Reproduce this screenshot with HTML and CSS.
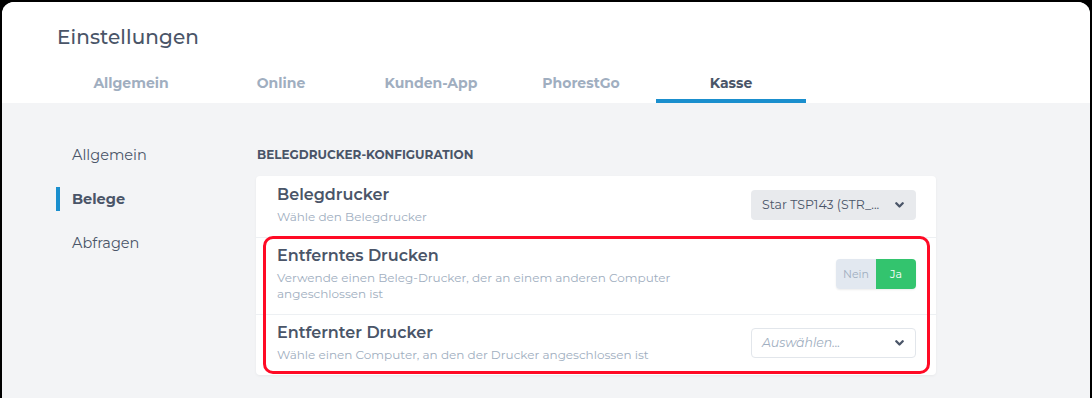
FILE: index.html
```html
<!DOCTYPE html>
<html lang="de">
<head>
<meta charset="utf-8">
<title>Einstellungen</title>
<link rel="stylesheet" href="styles.css">
</head>
<body>
<div class="window">
  <header class="header">
    <h1 class="title">Einstellungen</h1>
    <nav class="tabs">
      <div class="tab">Allgemein</div>
      <div class="tab">Online</div>
      <div class="tab">Kunden-App</div>
      <div class="tab">PhorestGo</div>
      <div class="tab tab-active">Kasse</div>
    </nav>
  </header>
  <main class="main">
    <aside class="sidebar">
      <div class="side-item">Allgemein</div>
      <div class="side-item side-active">Belege</div>
      <div class="side-item">Abfragen</div>
    </aside>
    <section class="content">
      <h2 class="section-title">BELEGDRUCKER-KONFIGURATION</h2>
      <div class="card">
        <div class="row">
          <div class="row-text">
            <div class="row-title">Belegdrucker</div>
            <div class="row-desc">Wähle den Belegdrucker</div>
          </div>
          <div class="select select-filled">
            <span class="select-value">Star TSP143 (STR_...</span>
            <svg class="chevron" width="9" height="6" viewBox="0 0 9 6"><path d="M1.3 1.3 L4.5 4.5 L7.7 1.3" fill="none" stroke="#4a5568" stroke-width="2.3" stroke-linecap="round" stroke-linejoin="round"/></svg>
          </div>
        </div>
        <div class="row">
          <div class="row-text">
            <div class="row-title">Entferntes Drucken</div>
            <div class="row-desc">Verwende einen Beleg-Drucker, der an einem anderen Computer angeschlossen ist</div>
          </div>
          <div class="toggle">
            <span class="toggle-off">Nein</span>
            <span class="toggle-on">Ja</span>
          </div>
        </div>
        <div class="row">
          <div class="row-text">
            <div class="row-title">Entfernter Drucker</div>
            <div class="row-desc">Wähle einen Computer, an den der Drucker angeschlossen ist</div>
          </div>
          <div class="select select-empty">
            <span class="select-placeholder">Auswählen...</span>
            <svg class="chevron" width="9" height="6" viewBox="0 0 9 6"><path d="M1.3 1.3 L4.5 4.5 L7.7 1.3" fill="none" stroke="#4a5568" stroke-width="2.3" stroke-linecap="round" stroke-linejoin="round"/></svg>
          </div>
        </div>
        <div class="highlight"></div>
      </div>
    </section>
  </main>
</div>
</body>
</html>
```
FILE: styles.css
```css
* { box-sizing: border-box; }
html, body { margin: 0; padding: 0; }
body {
  background: #000;
  width: 1092px;
  height: 398px;
  overflow: hidden;
  font-family: "Montserrat", "Inter", "DejaVu Sans", sans-serif;
  color: #4a5568;
}
.window {
  margin: 2px 2px 0 2px;
  height: 396px;
  background: #f3f4f6;
  border-radius: 12px 12px 0 0;
  overflow: hidden;
}
.header {
  background: #fff;
  height: 101px;
  padding: 22px 0 0 54px;
  display: flex;
  flex-direction: column;
}
.title {
  margin: 0 0 0 1px;
  font-size: 20px;
  line-height: 26px;
  font-weight: 500;
  color: #4a5568;
  letter-spacing: 0.1px;
}
.tabs {
  display: flex;
  margin-top: auto;
}
.tab {
  width: 150px;
  height: 36px;
  text-align: center;
  font-size: 14px;
  font-weight: 700;
  color: #a0aec0;
  line-height: 32px;
  border-bottom: 4px solid transparent;
}
.tab-active {
  color: #4a5568;
  border-bottom-color: #1a8fce;
}
.main {
  display: flex;
  padding-left: 54px;
}
.sidebar {
  width: 200px;
  padding-top: 40px;
}
.side-item {
  height: 24px;
  line-height: 24px;
  margin-bottom: 20px;
  padding-left: 12px;
  border-left: 4px solid transparent;
  font-size: 14.5px;
  color: #4a5568;
}
.side-active {
  border-left-color: #1a8fce;
  font-weight: 700;
}
.content {
  width: 680px;
  padding-top: 44px;
}
.section-title {
  margin: 0 0 13px 1px;
  font-size: 12px;
  line-height: 16px;
  font-weight: 700;
  color: #4a5568;
}
.card {
  position: relative;
  background: #fff;
  border-radius: 4px;
  box-shadow: 0 1px 3px rgba(0, 0, 0, 0.05);
}
.row {
  display: flex;
  align-items: center;
  justify-content: space-between;
  padding: 8px 20px 12px 21px;
}
.row + .row {
  border-top: 1px solid #edf0f3;
  padding-top: 7px;
}
.row-text {
  max-width: 420px;
}
.row-title {
  font-size: 16px;
  line-height: 22px;
  font-weight: 600;
  color: #4a5568;
}
.row-desc {
  margin-top: 3px;
  font-size: 12px;
  line-height: 16px;
  color: #a0aec0;
}
.select {
  width: 165px;
  height: 30px;
  border-radius: 4px;
  display: flex;
  align-items: center;
  justify-content: space-between;
  padding: 0 12px 0 11px;
  font-size: 12.5px;
}
.select-filled {
  background: #e8eaed;
  color: #4a5568;
}
.select-empty {
  background: #fff;
  border: 1px solid #e2e6eb;
  padding-left: 10px;
  padding-right: 11px;
}
.select-placeholder {
  font-style: italic;
  color: #a0aec0;
}
.chevron { display: block; }
.toggle {
  display: flex;
  width: 80px;
  height: 30px;
  border-radius: 4px;
  overflow: hidden;
  box-shadow: 0 1px 2px rgba(0, 0, 0, 0.08);
  font-size: 11px;
}
.toggle-off, .toggle-on {
  flex: 1;
  display: flex;
  align-items: center;
  justify-content: center;
}
.toggle-off {
  background: #e2e8f0;
  color: #a0aec0;
}
.toggle-on {
  background: #33c46e;
  color: #fff;
}
.highlight {
  position: absolute;
  left: 7px;
  top: 60px;
  width: 667px;
  height: 138px;
  border: 3px solid #ff0a25;
  border-radius: 10px;
  pointer-events: none;
}
```
